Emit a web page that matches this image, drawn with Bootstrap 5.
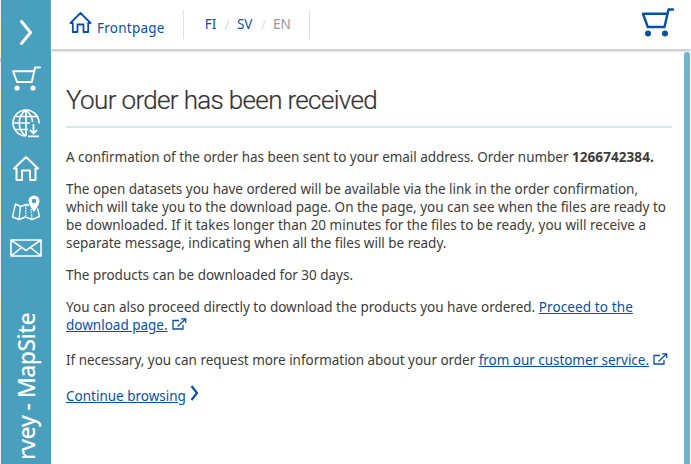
<!DOCTYPE html>
<html lang="en">
<head>
<meta charset="utf-8">
<meta name="viewport" content="width=device-width, initial-scale=1">
<title>Your order has been received</title>
<link href="https://cdn.jsdelivr.net/npm/bootstrap@5.3.0/dist/css/bootstrap.min.css" rel="stylesheet">
<style>
body{font-family:"Noto Sans",sans-serif;font-size:13.5px;line-height:18px;color:#3c3c3a;background:#fff}
a{color:#0550ad}
svg{fill:none;stroke:currentColor;display:block;flex:none}
.map-edge{width:1px;background:linear-gradient(#f5f1f3 0 20px,#fbf0c0 20px 58px,#c9c9d2 58px 62px,#f4f0f4 62px 88px,#fbf0c0 88px 150px,#f4f0f4 150px 166px,#fbf0c0 166px 224px,#f4f0f4 224px 298px,#fbf0c0 298px 384px,#f4f0f4 384px)}
.side{width:50px;background:#489fbe;color:#fff}
.side-title{writing-mode:vertical-rl;transform:rotate(180deg);font-size:23px;line-height:28px;margin:56px 0 0 0;font-weight:500;white-space:nowrap;letter-spacing:-.6px}
.topbar{height:50px;border-bottom:1px solid #c8dadd;box-shadow:0 1px 2px #bbb;position:relative}
.rule{width:1px;height:29px;background:#cfe6ec}
.slash{color:#cfe6ee;font-size:15px}
.scroll-thumb{width:6px;margin-top:2px;margin-right:1px;border-radius:3px 3px 0 0;background:#70b3cc}
.content-area{padding:31px 0 0 15px;width:621px}
h1{font-family:Roboto,sans-serif;font-weight:300;font-size:26px;line-height:38px;height:47px;border-bottom:2px solid #d4e8ee;margin:0 0 20px;letter-spacing:-.65px;color:#333;-webkit-text-stroke:.2px #333}
p{margin:0 0 14px;white-space:nowrap}
.ext{display:inline-block;vertical-align:0;color:#0550ad;margin-left:1px}
</style>
</head>
<body class="overflow-hidden">
<div class="d-flex vh-100">
  <div class="map-edge flex-shrink-0"></div>
  <aside class="side d-flex flex-column align-items-center flex-shrink-0 overflow-hidden">
    <svg width="14" height="27" style="margin-top:19px" viewBox="0 0 14 27" stroke-width="3" stroke-linecap="round" stroke-linejoin="round"><path d="M2.500 2.500 11.500 13.500 2.500 24.500"/></svg>
    <svg width="30" height="25" style="margin:20px 1px 0 0" viewBox="0 0 30 25" stroke-width="2" stroke-linecap="round" stroke-linejoin="round"><path d="M29 1.500h-5L20.800 16H6L2 5.200h21"/><g fill="currentColor" stroke="none"><circle cx="6" cy="22" r="2.600"/><circle cx="22" cy="22" r="2.600"/></g></svg>
    <svg width="30" height="30" style="margin-top:17px" viewBox="0 0 30 30" stroke-width="1.600"><path d="M28 15.500A13 13 0 1 0 15 28M15 2v26M15 2C6 8 6 22 15 28M15 2c4 3.500 6.500 8 6.500 12M4 8.500h22M2 15h17M4 21.500h13"/><path stroke-width="1.800" d="M22.500 16v9M19 22l3.500 3.500L26 22M17 28.300h11"/></svg>
    <svg width="28" height="26" style="margin-top:17px" viewBox="0 0 28 26" stroke-width="2" stroke-linejoin="round" stroke-linecap="round"><path d="M2 13.500 14 2l12 11.500h-2.500V25H18v-9.500h-8V25H4.500V13.500z"/></svg>
    <svg width="30" height="26" style="margin-top:14px" viewBox="0 0 30 26" stroke-width="1.400" stroke-linejoin="round"><path d="M18 10.500 15 9.500l-5.500 2L4.500 9 1.500 22l6.500 2.500 6.500-2.500 6.500 2.500 7.500-3-2-8M9.500 11.500 8 24.500"/><path stroke-dasharray="1.500 1" d="M14.800 10v12M20 14l1 10"/><path fill="currentColor" stroke="none" fill-rule="evenodd" d="M23 .5a5.500 5.500 0 0 0-5.500 5.500C17.500 10 23 17 23 17s5.500-7 5.500-11A5.500 5.500 0 0 0 23 .5m0 3.300a2.200 2.200 0 1 1 0 4.400 2.200 2.200 0 0 1 0-4.400"/></svg>
    <svg width="32" height="18" style="margin-top:18px" viewBox="0 0 32 18" stroke-width="1.600" stroke-linejoin="round"><path d="M1 1h30v16H1zM1 1l15 10.500L31 1M1 17l10.500-8.500M31 17 20.500 8.500"/></svg>
    <div class="side-title">rvey - MapSite</div>
  </aside>
  <div class="flex-grow-1 d-flex flex-column">
    <header class="topbar d-flex flex-shrink-0">
      <a href="#" class="d-flex text-decoration-none" style="padding:12px 0 0 18px">
        <svg width="23" height="21" viewBox="0 0 23 21" stroke-width="1.800" stroke-linejoin="round" stroke-linecap="round"><path d="M1.500 11 11.500 1l10 10h-2.300v9h-4.700v-7.500H8.500V20H3.800v-9z"/></svg>
        <span style="margin:7px 0 0 5px;letter-spacing:.25px">Frontpage</span>
      </a>
      <div class="rule" style="margin:10px 0 0 18px"></div>
      <nav class="d-flex" style="margin:15px 0 0 21px">
        <a href="#" class="text-decoration-none">FI</a><span class="slash" style="margin:0 7px 0 8px">/</span><a href="#" class="text-decoration-none">SV</a><span class="slash" style="margin:0 7px 0 8px">/</span><span style="color:#999">EN</span>
      </nav>
      <div class="rule" style="margin:10px 0 0 18px"></div>
      <a href="#" class="ms-auto" style="margin:7px 16px 0 0" aria-label="Cart">
        <svg width="34" height="31" viewBox="0 0 34 31" stroke-width="2.400" stroke-linecap="round" stroke-linejoin="round"><path d="M32 2.500h-4.500L23.500 20H6.800L2 6.800h24"/><g fill="currentColor" stroke="none"><circle cx="7" cy="26.600" r="3"/><circle cx="24" cy="26.600" r="3"/></g></svg>
      </a>
    </header>
    <div class="d-flex flex-grow-1">
      <main class="content-area">
        <h1>Your order has been received</h1>
        <p><span style="letter-spacing:-.03px">A confirmation of the order has been sent to your email address. Order number </span><b style="letter-spacing:.08px">1266742384.</b></p>
        <p><span style="letter-spacing:-.02px">The open datasets you have ordered will be available via the link in the order confirmation,</span><br>
        <span style="letter-spacing:-.01px">which will take you to the download page. On the page, you can see when the files are ready to</span><br>
        <span>be downloaded. If it takes longer than 20 minutes for the files to be ready, you will receive a</span><br>
        <span style="letter-spacing:-.02px">separate message, indicating when all the files will be ready.</span></p>
        <p style="letter-spacing:-.02px">The products can be downloaded for 30 days.</p>
        <p style="margin-bottom:17px">You can also proceed directly to download the products you have ordered. <a href="#"><span style="letter-spacing:.12px">Proceed to the</span><br>download page.</a>
        <svg class="ext" width="15" height="12" viewBox="0 0 15 12" stroke-width="1.300"><path d="M7 2.500H1v8.500h10V7M5.500 8.500 13.500 1M9 .9h4.700V5"/></svg></p>
        <p style="margin-bottom:18px;letter-spacing:-.035px">If necessary, you can request more information about your order <a href="#">from our customer service.</a>
        <svg class="ext" width="15" height="12" viewBox="0 0 15 12" stroke-width="1.300"><path d="M7 2.500H1v8.500h10V7M5.500 8.500 13.500 1M9 .9h4.700V5"/></svg></p>
        <p class="d-flex"><a href="#">Continue browsing</a>
        <svg width="9" height="16" style="margin:-2px 0 0 4px;color:#0550ad" viewBox="0 0 9 16" stroke-width="2.200"><path d="m1.500 1 5.500 7-5.500 7"/></svg></p>
      </main>
      <div class="scroll-thumb ms-auto"></div>
    </div>
  </div>
</div>
<script src="https://cdn.jsdelivr.net/npm/bootstrap@5.3.0/dist/js/bootstrap.bundle.min.js"></script>
</body>
</html>
